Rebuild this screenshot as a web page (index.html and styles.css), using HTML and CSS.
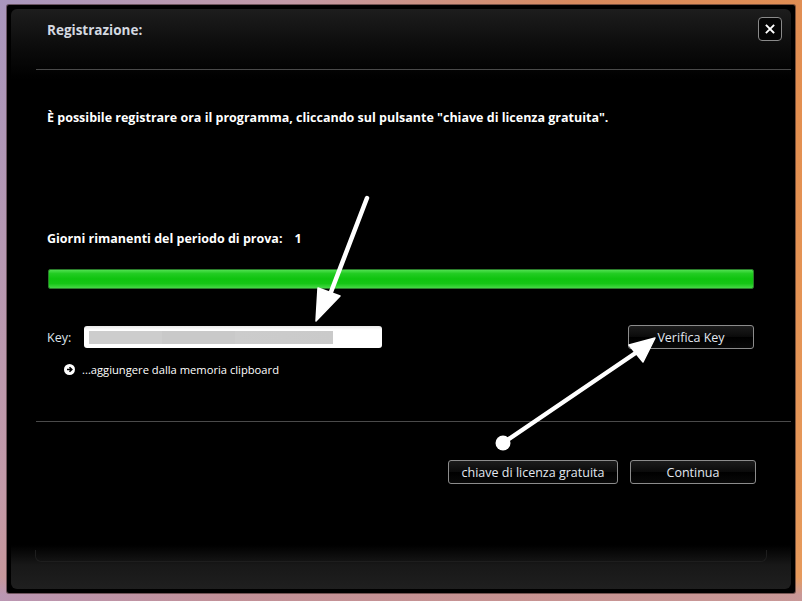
FILE: index.html
```html
<!DOCTYPE html>
<html lang="it">
<head>
<meta charset="utf-8">
<title>Registrazione</title>
<link rel="stylesheet" href="styles.css">
</head>
<body>
<div class="window">
  <div class="panel">
    <div class="header">
      <div class="title">Registrazione:</div>
      <button class="close" aria-label="Chiudi">
        <svg width="10" height="10" viewBox="0 0 10 10"><path d="M1.5 1.5L8.5 8.5M8.5 1.5L1.5 8.5" stroke="#fff" stroke-width="1.8" stroke-linecap="square"/></svg>
      </button>
    </div>
    <div class="sep"></div>
    <div class="content">
      <p class="intro">È possibile registrare ora il programma, cliccando sul pulsante "chiave di licenza gratuita".</p>
      <p class="days">Giorni rimanenti del periodo di prova:<span class="count">1</span></p>
      <div class="progress"><div class="progress-fill"></div></div>
      <div class="key-row">
        <div class="key-left">
          <span class="key-label">Key:</span>
          <div class="key-input"><div class="key-blur"></div></div>
        </div>
        <button class="btn btn-verify">Verifica Key</button>
      </div>
      <div class="clip-row">
        <svg class="clip-icon" width="11" height="11" viewBox="0 0 11 11"><circle cx="5.5" cy="5.5" r="5.5" fill="#fff"/><path d="M3 5.5H7.5M5.5 3.2L7.8 5.5L5.5 7.8" stroke="#000" stroke-width="1.6" fill="none"/></svg>
        <span>...aggiungere dalla memoria clipboard</span>
      </div>
    </div>
    <div class="sep sep-bottom"></div>
    <div class="actions">
      <button class="btn btn-free">chiave di licenza gratuita</button>
      <button class="btn btn-continue">Continua</button>
    </div>
    <div class="footer"><div class="footer-edge"></div></div>
  </div>
</div>
<svg class="arrows" width="802" height="601" viewBox="0 0 802 601">
  <path d="M367 198L331 292" stroke="#fff" stroke-width="4.5" stroke-linecap="round"/>
  <path d="M316 321L318 288L340 296Z" fill="#fff" stroke="#fff" stroke-width="1.5" stroke-linejoin="round"/>
  <circle cx="503" cy="443" r="7.5" fill="#fff"/>
  <path d="M503 443L637 352" stroke="#fff" stroke-width="4.5" stroke-linecap="round"/>
  <path d="M655 338L629 345L643 362Z" fill="#fff" stroke="#fff" stroke-width="1.5" stroke-linejoin="round"/>
</svg>
</body>
</html>
```
FILE: styles.css
```css
* { box-sizing: border-box; }
html, body { margin: 0; padding: 0; }
body {
  width: 802px;
  height: 601px;
  overflow: hidden;
  position: relative;
  padding: 5px 7px 8px 7px;
  background:
    linear-gradient(180deg, rgba(0,0,0,0) 0, rgba(0,0,0,0) 96%, rgba(176,150,200,0.55) 99%),
    linear-gradient(120deg, #a996bd 0%, #c39aa8 25%, #d88a5e 50%, #e38f50 75%, #e69a5c 100%);
  font-family: "Open Sans", "Noto Sans", "DejaVu Sans", sans-serif;
}
.window {
  width: 788px;
  height: 588px;
  background: #000;
  padding: 4px;
  border-radius: 2px;
  box-shadow: 0 0 0 1px rgba(60,40,40,0.6);
}
.panel {
  height: 580px;
  border-radius: 6px;
  background:
    linear-gradient(180deg, #1d1d1d 0, #0b0b0b 40px, #000 70px, #000 536px, #181818 556px, #1f1f1f 100%);
  display: flex;
  flex-direction: column;
  position: relative;
}
.header {
  height: 60px;
  display: flex;
  justify-content: space-between;
  align-items: flex-start;
  padding: 0 9px 0 36px;
}
.title {
  margin-top: 12px;
  font-size: 13.5px;
  font-weight: 700;
  line-height: 18px;
  color: #d4d9e0;
}
.close {
  margin-top: 8px;
  width: 24px;
  height: 24px;
  padding: 0;
  border: 1px solid #8a8a8a;
  border-radius: 4px;
  background: #050505;
  display: flex;
  align-items: center;
  justify-content: center;
}
.sep {
  height: 1px;
  margin-left: 25px;
  background: #4a4a4a;
}
.content {
  padding: 0 37px 0 36px;
}
.intro {
  margin: 40px 0 0 0;
  font-size: 12.5px;
  line-height: 16px;
  font-weight: 700;
  color: #fff;
}
.days {
  margin: 105px 0 0 0;
  font-size: 12.5px;
  line-height: 16px;
  font-weight: 700;
  color: #fff;
}
.count { margin-left: 12px; }
.progress {
  margin: 22px 0 0 1px;
  height: 20px;
  border-radius: 2px;
  border: 1px solid #2a7a2a;
  background: #111;
  overflow: hidden;
}
.progress-fill {
  height: 100%;
  width: 100%;
  background: linear-gradient(180deg, #4fe04f 0, #22cc22 20%, #0fc40f 50%, #16c616 75%, #45d845 100%);
}
.key-row {
  margin-top: 36px;
  display: flex;
  justify-content: space-between;
  align-items: center;
  height: 24px;
}
.key-left {
  display: flex;
  align-items: center;
}
.key-label {
  font-size: 12.5px;
  color: #dde3ea;
  width: 37px;
}
.key-input {
  width: 298px;
  height: 22px;
  border-radius: 3px;
  background: linear-gradient(180deg, #e8e8e8 0, #fff 4px, #fff 100%);
  padding: 5px 0 0 5px;
}
.key-blur {
  width: 244px;
  height: 13px;
  background: linear-gradient(90deg, #cdcdcd 0, #cdcdcd 30%, #c9c9c9 30%, #c9c9c9 60%, #cccccc 60%, #cacaca 100%);
}
.btn {
  height: 24px;
  padding: 2px 0 0 0;
  border: 1px solid #8c8c8c;
  border-radius: 3px;
  background: linear-gradient(180deg, #1c1c1c 0, #0a0a0a 50%, #000 51%, #080808 100%);
  color: #e2e8f0;
  font-family: "Open Sans", "Noto Sans", "DejaVu Sans", sans-serif;
  font-size: 12.5px;
  line-height: 20px;
}
.btn-verify { width: 126px; }
.clip-row {
  margin: 12px 0 0 17px;
  display: flex;
  align-items: center;
  height: 16px;
  font-size: 11.2px;
  color: #fff;
}
.clip-icon { margin-right: 7px; }
.sep-bottom { margin-top: 44px; }
.actions {
  margin-top: 38px;
  display: flex;
  justify-content: flex-end;
  gap: 12px;
  padding-right: 35px;
}
.btn-free { width: 170px; }
.btn-continue { width: 126px; }
.footer {
  flex: 1;
  position: relative;
}
.footer-edge {
  position: absolute;
  left: 24px;
  right: 24px;
  bottom: 27px;
  height: 12px;
  border: 1px solid #1e1e1e;
  border-top: none;
  border-radius: 0 0 6px 6px;
}
.arrows {
  position: absolute;
  left: 0;
  top: 0;
  pointer-events: none;
}
```
